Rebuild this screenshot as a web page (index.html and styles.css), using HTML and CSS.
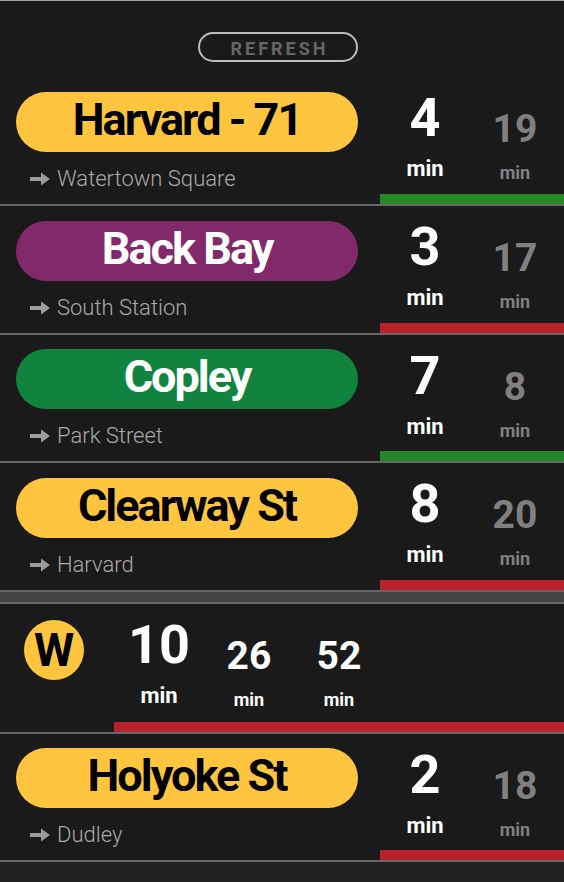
FILE: index.html
```html
<!DOCTYPE html>
<html lang="en">
<head>
<meta charset="utf-8">
<title>Departures</title>
<link rel="stylesheet" href="styles.css">
</head>
<body>
<div class="app">
  <header class="top">
    <button class="refresh">REFRESH</button>
  </header>

  <div class="row">
    <div class="stop">
      <div class="pill pill-yellow">Harvard - 71</div>
      <div class="dest"><svg class="arrow" viewBox="0 0 20 14" width="20" height="14"><path d="M0 5H11V0.5L20 7L11 13.5V9H0Z"/></svg>Watertown Square</div>
    </div>
    <div class="times">
      <div class="cols">
        <div class="col col-main"><span class="num">4</span><span class="unit">min</span></div>
        <div class="col col-next"><span class="num">19</span><span class="unit">min</span></div>
      </div>
      <div class="bar bar-green"></div>
    </div>
  </div>

  <div class="row">
    <div class="stop">
      <div class="pill pill-purple">Back Bay</div>
      <div class="dest"><svg class="arrow" viewBox="0 0 20 14" width="20" height="14"><path d="M0 5H11V0.5L20 7L11 13.5V9H0Z"/></svg>South Station</div>
    </div>
    <div class="times">
      <div class="cols">
        <div class="col col-main"><span class="num">3</span><span class="unit">min</span></div>
        <div class="col col-next"><span class="num">17</span><span class="unit">min</span></div>
      </div>
      <div class="bar bar-red"></div>
    </div>
  </div>

  <div class="row">
    <div class="stop">
      <div class="pill pill-green">Copley</div>
      <div class="dest"><svg class="arrow" viewBox="0 0 20 14" width="20" height="14"><path d="M0 5H11V0.5L20 7L11 13.5V9H0Z"/></svg>Park Street</div>
    </div>
    <div class="times">
      <div class="cols">
        <div class="col col-main"><span class="num">7</span><span class="unit">min</span></div>
        <div class="col col-next"><span class="num">8</span><span class="unit">min</span></div>
      </div>
      <div class="bar bar-green"></div>
    </div>
  </div>

  <div class="row">
    <div class="stop">
      <div class="pill pill-yellow">Clearway St</div>
      <div class="dest"><svg class="arrow" viewBox="0 0 20 14" width="20" height="14"><path d="M0 5H11V0.5L20 7L11 13.5V9H0Z"/></svg>Harvard</div>
    </div>
    <div class="times">
      <div class="cols">
        <div class="col col-main"><span class="num">8</span><span class="unit">min</span></div>
        <div class="col col-next"><span class="num">20</span><span class="unit">min</span></div>
      </div>
      <div class="bar bar-red"></div>
    </div>
  </div>

  <div class="divider"></div>

  <div class="row row-w">
    <div class="badge">W</div>
    <div class="times times-wide">
      <div class="cols">
        <div class="col col-main"><span class="num">10</span><span class="unit">min</span></div>
        <div class="col col-next col-bright"><span class="num">26</span><span class="unit">min</span></div>
        <div class="col col-next col-bright"><span class="num">52</span><span class="unit">min</span></div>
      </div>
      <div class="bar bar-red"></div>
    </div>
  </div>

  <div class="row row-last">
    <div class="stop">
      <div class="pill pill-yellow">Holyoke St</div>
      <div class="dest"><svg class="arrow" viewBox="0 0 20 14" width="20" height="14"><path d="M0 5H11V0.5L20 7L11 13.5V9H0Z"/></svg>Dudley</div>
    </div>
    <div class="times">
      <div class="cols">
        <div class="col col-main"><span class="num">2</span><span class="unit">min</span></div>
        <div class="col col-next"><span class="num">18</span><span class="unit">min</span></div>
      </div>
      <div class="bar bar-red"></div>
    </div>
  </div>
</div>
</body>
</html>
```

FILE: styles.css
```css
html, body {
  margin: 0;
  padding: 0;
  background: #222222;
  font-family: Roboto, "Liberation Sans", sans-serif;
}

.app {
  width: 564px;
}

.top {
  height: 77.33px;
  box-sizing: border-box;
  border-top: 1px solid #a3a3a3;
  padding: 31px 8px 0 0;
  background: #1a1a1a;
  display: flex;
  justify-content: center;
  align-items: flex-start;
}

.refresh {
  width: 160px;
  height: 30px;
  box-sizing: border-box;
  border: 2px solid #bcbcbc;
  border-radius: 15px;
  background: transparent;
  color: #666666;
  font-family: Roboto, "Liberation Sans", sans-serif;
  font-weight: 700;
  font-size: 18px;
  line-height: 20px;
  letter-spacing: 3px;
  padding: 4px 0 0 3px;
  margin: 0;
}

.row {
  height: 126.67px;
  border-bottom: 2px solid #666666;
  background: #1a1a1a;
  display: flex;
}

.row-w {
  height: 128px;
}

.row-last {
  height: 126px;
}

.stop {
  width: 342px;
  padding: 14.67px 0 0 16px;
}

.row-last .stop {
  padding-top: 14px;
}

.pill {
  height: 60px;
  box-sizing: border-box;
  border-radius: 30px;
  display: flex;
  align-items: center;
  justify-content: center;
  font-weight: 700;
  font-size: 45px;
  line-height: 45px;
  letter-spacing: -2px;
  padding-bottom: 5px;
  white-space: nowrap;
}

.pill-yellow {
  background: #ffc53e;
  color: #000000;
}

.pill-purple {
  background: #82296c;
  color: #ffffff;
}

.pill-green {
  background: #10843f;
  color: #ffffff;
}

.dest {
  margin-top: 14px;
  padding-left: 14px;
  display: flex;
  align-items: center;
  font-weight: 300;
  font-size: 22px;
  line-height: 26px;
  color: #a9a9a9;
  white-space: nowrap;
}

.arrow {
  fill: #9c9c9c;
  margin-right: 7px;
  flex-shrink: 0;
}

.times {
  width: 184px;
  margin-left: 22px;
  display: flex;
  flex-direction: column;
}

.times-wide {
  width: auto;
  flex: 1;
  margin-left: 30px;
}

.cols {
  display: flex;
  flex: 1;
}

.col {
  width: 90px;
  display: flex;
  flex-direction: column;
  align-items: center;
  font-weight: 700;
}

.col-main {
  color: #ffffff;
}

.col-main .num {
  font-size: 54px;
  line-height: 54px;
  margin-top: 14px;
}

.col-main .unit {
  font-size: 22px;
  line-height: 22px;
  margin-top: 13px;
}

.col-next {
  color: #808080;
}

.col-bright {
  color: #ffffff;
}

.col-next .num {
  font-size: 39px;
  line-height: 39px;
  margin-top: 33px;
}

.col-next .unit {
  font-size: 18px;
  line-height: 18px;
  margin-top: 15px;
}

.bar {
  height: 10px;
}

.bar-green {
  background: #24872a;
}

.bar-red {
  background: #b9222a;
}

.divider {
  height: 10px;
  background: #444444;
  border-bottom: 2px solid #666666;
}

.badge {
  width: 60px;
  height: 60px;
  margin: 16px 0 0 24px;
  border-radius: 50%;
  background: #ffc53e;
  color: #000000;
  display: flex;
  align-items: center;
  justify-content: center;
  font-weight: 700;
  font-size: 46px;
  line-height: 46px;
  flex-shrink: 0;
}
```
